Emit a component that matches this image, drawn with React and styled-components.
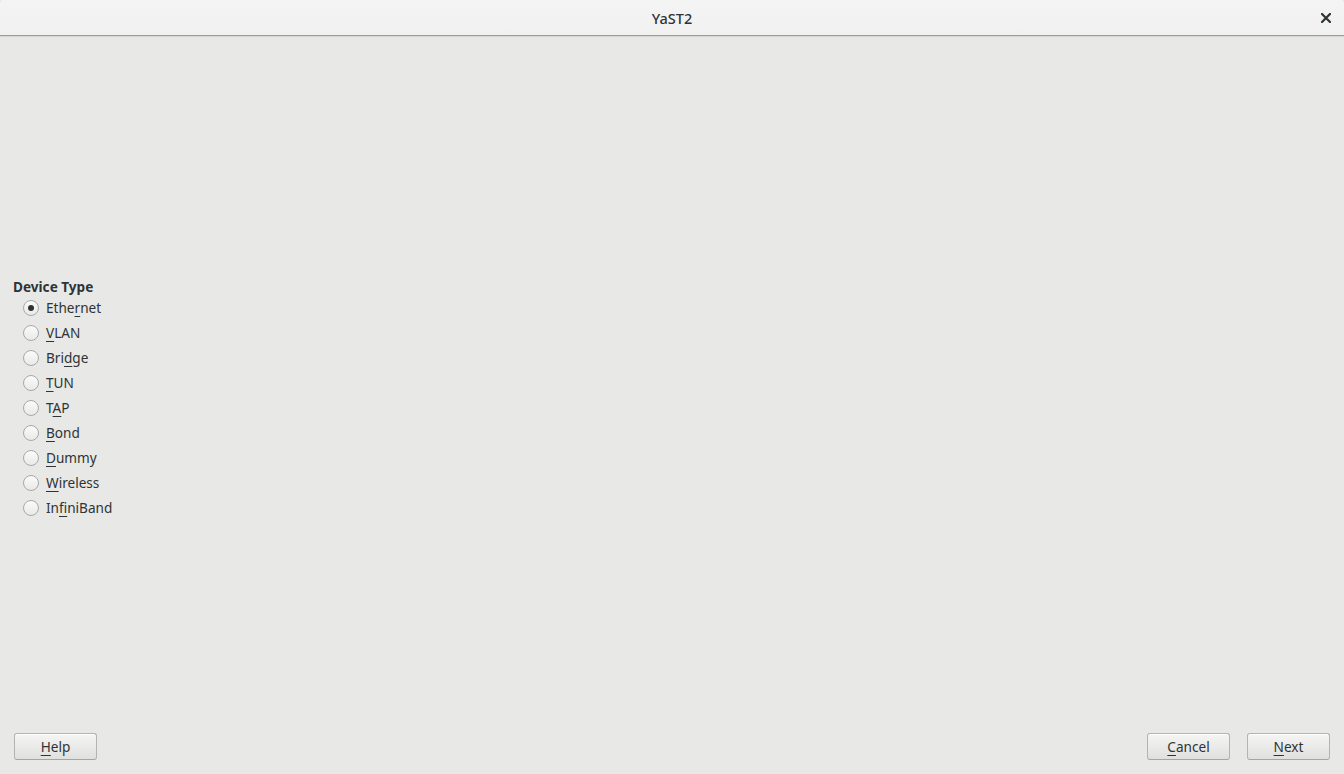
import styled, { createGlobalStyle } from 'styled-components';

const Global = createGlobalStyle`
    html, body {
        margin: 0;
        padding: 0;
        height: 100%;
        background: #e8e8e7;
    }
    #root {
        height: 100%;
    }
`

const Window = styled.div`
    display: flex;
    flex-direction: column;
    height: 774px;
    width: 1344px;
    background-color: #e8e8e7;
    font-family: "Noto Sans", "Open Sans", sans-serif;
    font-size: 13.6px;
    color: #2e3436;
    overflow: hidden;
`

const TitleBar = styled.header`
    position: relative;
    display: flex;
    align-items: center;
    justify-content: center;
    height: 35px;
    background: linear-gradient(#f4f4f4, #f1f1f1);
    border-top-left-radius: 4px;
    border-top-right-radius: 4px;
    border-bottom: 1px solid #9c9c9a;
    box-shadow: 0 1px 0 #d5d5d3;
    flex-shrink: 0;

    h1 {
        margin: 0;
        font-size: 14.5px;
        font-weight: 500;
        color: #2e3436;
        padding-top: 1px;
    }
`

const CloseButton = styled.span`
    position: absolute;
    right: 13px;
    top: 13px;
    width: 10px;
    height: 10px;
    display: flex;
`

const Content = styled.main`
    flex: 1;
    display: flex;
    flex-direction: column;
    justify-content: center;
    padding: 29px 13px 0;
`

const GroupTitle = styled.div`
    font-weight: bold;
    line-height: 18px;
    margin-bottom: -1px;
`

const RadioList = styled.div`
    display: flex;
    flex-direction: column;
    padding-left: 10px;
`

const RadioRow = styled.label`
    display: flex;
    align-items: center;
    height: 25px;
    gap: 7px;
    line-height: 18px;
`

const RadioDot = styled.span`
    width: 14px;
    height: 14px;
    border-radius: 50%;
    border: 1px solid #a9a9a6;
    background: linear-gradient(#fbfbfb, #e9e9e8);
    display: flex;
    align-items: center;
    justify-content: center;

    &::after {
        content: '';
        display: ${p => p.checked ? 'block' : 'none'};
        width: 6px;
        height: 6px;
        border-radius: 50%;
        background: #2e3436;
    }
`

const Key = styled.span`
    text-decoration: underline;
    text-decoration-thickness: 1px;
    text-underline-offset: 3px;
`

const ButtonBar = styled.footer`
    display: flex;
    justify-content: space-between;
    align-items: center;
    padding: 0 14px 14px;
    height: 27px;
    flex-shrink: 0;

    div {
        display: flex;
        gap: 17px;
    }
`

const Button = styled.button`
    width: 83px;
    height: 27px;
    border: 1px solid #b3b3b0;
    border-bottom-color: #a5a5a2;
    border-radius: 3px;
    background: linear-gradient(#f5f5f4, #e0e0de);
    font-family: "Noto Sans", "Open Sans", sans-serif;
    font-size: 13.6px;
    color: #2e3436;
    padding: 0;
    box-shadow: inset 0 1px 0 #ffffff;
`

const Mnemonic = ({ text, at }) => (
    <>
        {text.slice(0, at)}
        <Key>{text[at]}</Key>
        {text.slice(at + 1)}
    </>
)

const devices = [
    ['Ethernet', 4],
    ['VLAN', 0],
    ['Bridge', 3],
    ['TUN', 0],
    ['TAP', 1],
    ['Bond', 0],
    ['Dummy', 0],
    ['Wireless', 0],
    ['InfiniBand', 2],
]

const App = () => {
    return (
        <>
            <Global />
            <Window>
                <TitleBar>
                    <h1>YaST2</h1>
                    <CloseButton>
                        <svg width="10" height="10" viewBox="0 0 10 10">
                            <path d="M1 1 L9 9 M9 1 L1 9" stroke="#2e3436" strokeWidth="2.2" strokeLinecap="square" />
                        </svg>
                    </CloseButton>
                </TitleBar>

                <Content>
                    <GroupTitle>Device Type</GroupTitle>
                    <RadioList>
                        {devices.map(([name, at], i) => (
                            <RadioRow key={name}>
                                <RadioDot checked={i === 0} />
                                <span><Mnemonic text={name} at={at} /></span>
                            </RadioRow>
                        ))}
                    </RadioList>
                </Content>

                <ButtonBar>
                    <Button><Mnemonic text="Help" at={0} /></Button>
                    <div>
                        <Button><Mnemonic text="Cancel" at={0} /></Button>
                        <Button><Mnemonic text="Next" at={0} /></Button>
                    </div>
                </ButtonBar>
            </Window>
        </>
    );
};

export default App;
